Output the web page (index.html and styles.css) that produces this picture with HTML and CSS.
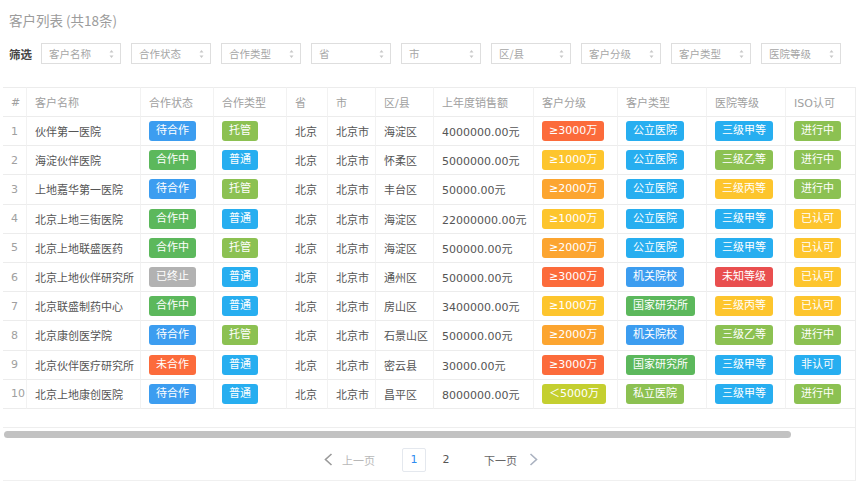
FILE: index.html
```html
<!DOCTYPE html>
<html lang="zh-CN">
<head>
<meta charset="utf-8">
<title>客户列表</title>
<link rel="stylesheet" href="styles.css">
</head>
<body>
<div class="title">客户列表 (共18条)</div>
<div class="filters">
  <span class="filters-label">筛选</span>
  <div class="select"><span>客户名称</span><svg class="arrows" width="5" height="10" viewBox="0 0 5 10"><path d="M2.5 1 L4.5 3.5 L0.5 3.5 Z M2.5 9 L4.5 6.5 L0.5 6.5 Z"/></svg></div>
  <div class="select"><span>合作状态</span><svg class="arrows" width="5" height="10" viewBox="0 0 5 10"><path d="M2.5 1 L4.5 3.5 L0.5 3.5 Z M2.5 9 L4.5 6.5 L0.5 6.5 Z"/></svg></div>
  <div class="select"><span>合作类型</span><svg class="arrows" width="5" height="10" viewBox="0 0 5 10"><path d="M2.5 1 L4.5 3.5 L0.5 3.5 Z M2.5 9 L4.5 6.5 L0.5 6.5 Z"/></svg></div>
  <div class="select"><span>省</span><svg class="arrows" width="5" height="10" viewBox="0 0 5 10"><path d="M2.5 1 L4.5 3.5 L0.5 3.5 Z M2.5 9 L4.5 6.5 L0.5 6.5 Z"/></svg></div>
  <div class="select"><span>市</span><svg class="arrows" width="5" height="10" viewBox="0 0 5 10"><path d="M2.5 1 L4.5 3.5 L0.5 3.5 Z M2.5 9 L4.5 6.5 L0.5 6.5 Z"/></svg></div>
  <div class="select"><span>区/县</span><svg class="arrows" width="5" height="10" viewBox="0 0 5 10"><path d="M2.5 1 L4.5 3.5 L0.5 3.5 Z M2.5 9 L4.5 6.5 L0.5 6.5 Z"/></svg></div>
  <div class="select"><span>客户分级</span><svg class="arrows" width="5" height="10" viewBox="0 0 5 10"><path d="M2.5 1 L4.5 3.5 L0.5 3.5 Z M2.5 9 L4.5 6.5 L0.5 6.5 Z"/></svg></div>
  <div class="select"><span>客户类型</span><svg class="arrows" width="5" height="10" viewBox="0 0 5 10"><path d="M2.5 1 L4.5 3.5 L0.5 3.5 Z M2.5 9 L4.5 6.5 L0.5 6.5 Z"/></svg></div>
  <div class="select"><span>医院等级</span><svg class="arrows" width="5" height="10" viewBox="0 0 5 10"><path d="M2.5 1 L4.5 3.5 L0.5 3.5 Z M2.5 9 L4.5 6.5 L0.5 6.5 Z"/></svg></div>
</div>

<div class="panel">
  <table class="grid">
    <colgroup>
      <col class="c-idx"><col class="c-name"><col class="c-status"><col class="c-type"><col class="c-prov"><col class="c-city"><col class="c-dist"><col class="c-sales"><col class="c-level"><col class="c-ctype"><col class="c-grade"><col class="c-iso">
    </colgroup>
    <thead>
      <tr><th>#</th><th>客户名称</th><th>合作状态</th><th>合作类型</th><th>省</th><th>市</th><th>区/县</th><th>上年度销售额</th><th>客户分级</th><th>客户类型</th><th>医院等级</th><th>ISO认可</th></tr>
    </thead>
    <tbody>
      <tr><td class="idx">1</td><td>伙伴第一医院</td><td><span class="tag blue">待合作</span></td><td><span class="tag lgreen">托管</span></td><td>北京</td><td>北京市</td><td>海淀区</td><td>4000000.00元</td><td><span class="tag redorange">≥3000万</span></td><td><span class="tag sky">公立医院</span></td><td><span class="tag sky">三级甲等</span></td><td><span class="tag lgreen">进行中</span></td></tr>
      <tr><td class="idx">2</td><td>海淀伙伴医院</td><td><span class="tag green">合作中</span></td><td><span class="tag sky">普通</span></td><td>北京</td><td>北京市</td><td>怀柔区</td><td>5000000.00元</td><td><span class="tag yellow">≥1000万</span></td><td><span class="tag sky">公立医院</span></td><td><span class="tag lgreen">三级乙等</span></td><td><span class="tag lgreen">进行中</span></td></tr>
      <tr><td class="idx">3</td><td>上地嘉华第一医院</td><td><span class="tag blue">待合作</span></td><td><span class="tag lgreen">托管</span></td><td>北京</td><td>北京市</td><td>丰台区</td><td>50000.00元</td><td><span class="tag orange">≥2000万</span></td><td><span class="tag sky">公立医院</span></td><td><span class="tag yellow">三级丙等</span></td><td><span class="tag lgreen">进行中</span></td></tr>
      <tr><td class="idx">4</td><td>北京上地三街医院</td><td><span class="tag green">合作中</span></td><td><span class="tag sky">普通</span></td><td>北京</td><td>北京市</td><td>海淀区</td><td>22000000.00元</td><td><span class="tag yellow">≥1000万</span></td><td><span class="tag sky">公立医院</span></td><td><span class="tag sky">三级甲等</span></td><td><span class="tag yellow">已认可</span></td></tr>
      <tr><td class="idx">5</td><td>北京上地联盛医药</td><td><span class="tag green">合作中</span></td><td><span class="tag lgreen">托管</span></td><td>北京</td><td>北京市</td><td>海淀区</td><td>500000.00元</td><td><span class="tag orange">≥2000万</span></td><td><span class="tag sky">公立医院</span></td><td><span class="tag sky">三级甲等</span></td><td><span class="tag yellow">已认可</span></td></tr>
      <tr><td class="idx">6</td><td>北京上地伙伴研究所</td><td><span class="tag gray">已终止</span></td><td><span class="tag sky">普通</span></td><td>北京</td><td>北京市</td><td>通州区</td><td>500000.00元</td><td><span class="tag redorange">≥3000万</span></td><td><span class="tag blue">机关院校</span></td><td><span class="tag red">未知等级</span></td><td><span class="tag yellow">已认可</span></td></tr>
      <tr><td class="idx">7</td><td>北京联盛制药中心</td><td><span class="tag green">合作中</span></td><td><span class="tag sky">普通</span></td><td>北京</td><td>北京市</td><td>房山区</td><td>3400000.00元</td><td><span class="tag yellow">≥1000万</span></td><td><span class="tag green">国家研究所</span></td><td><span class="tag yellow">三级丙等</span></td><td><span class="tag yellow">已认可</span></td></tr>
      <tr><td class="idx">8</td><td>北京康创医学院</td><td><span class="tag blue">待合作</span></td><td><span class="tag lgreen">托管</span></td><td>北京</td><td>北京市</td><td>石景山区</td><td>500000.00元</td><td><span class="tag orange">≥2000万</span></td><td><span class="tag blue">机关院校</span></td><td><span class="tag lgreen">三级乙等</span></td><td><span class="tag lgreen">进行中</span></td></tr>
      <tr><td class="idx">9</td><td>北京伙伴医疗研究所</td><td><span class="tag redorange">未合作</span></td><td><span class="tag sky">普通</span></td><td>北京</td><td>北京市</td><td>密云县</td><td>30000.00元</td><td><span class="tag redorange">≥3000万</span></td><td><span class="tag green">国家研究所</span></td><td><span class="tag sky">三级甲等</span></td><td><span class="tag sky">非认可</span></td></tr>
      <tr><td class="idx">10</td><td>北京上地康创医院</td><td><span class="tag blue">待合作</span></td><td><span class="tag sky">普通</span></td><td>北京</td><td>北京市</td><td>昌平区</td><td>8000000.00元</td><td><span class="tag lime">＜5000万</span></td><td><span class="tag lgreen">私立医院</span></td><td><span class="tag sky">三级甲等</span></td><td><span class="tag lgreen">进行中</span></td></tr>
    </tbody>
  </table>

  <div class="hscroll"><div class="thumb"></div></div>

  <div class="pager">
    <div class="pg-prev">
      <svg width="9" height="13" viewBox="0 0 9 13"><polyline points="7.5,1 1.5,6.5 7.5,12" fill="none" stroke="#9a9a9a" stroke-width="1.6"/></svg>
      <span>上一页</span>
    </div>
    <div class="pg-pages">
      <span class="pg-num active">1</span>
      <span class="pg-num">2</span>
    </div>
    <div class="pg-next">
      <span>下一页</span>
      <svg width="9" height="13" viewBox="0 0 9 13"><polyline points="1.5,1 7.5,6.5 1.5,12" fill="none" stroke="#aab2c0" stroke-width="1.6"/></svg>
    </div>
  </div>
</div>
</body>
</html>
```

FILE: styles.css
```css
html, body {
  margin: 0;
  padding: 0;
  background: #fff;
}

body {
  font-family: "DejaVu Sans", "Noto Sans CJK SC", sans-serif;
  font-size: 11px;
  color: #555;
}

.title {
  padding: 10px 9px 0;
  height: 20px;
  line-height: 20px;
  font-family: "Noto Sans CJK SC", sans-serif;
  font-size: 13.5px;
  color: #9c9c9c;
}

.filters {
  display: flex;
  align-items: center;
  gap: 10px;
  margin-top: 13px;
  padding-left: 9px;
  height: 21px;
}

.filters-label {
  flex: 0 0 22px;
  width: 22px;
  white-space: nowrap;
  font-family: "Noto Sans CJK SC", sans-serif;
  font-weight: bold;
  font-size: 11.5px;
  color: #444;
}

.select {
  flex: 0 0 80px;
  width: 80px;
  height: 21px;
  box-sizing: border-box;
  border: 1px solid #dedede;
  display: flex;
  align-items: center;
  justify-content: space-between;
  padding: 0 6px 0 7px;
  font-family: "Noto Sans CJK SC", sans-serif;
  font-size: 10.5px;
  color: #a6a6a6;
}

.arrows {
  fill: #c8c8c8;
}

.panel {
  margin: 23px 0 0 3px;
  width: 853px;
  box-sizing: border-box;
  border-right: 1px solid #ededed;
  border-bottom: 1px solid #f0f0f0;
  overflow: hidden;
}

.grid {
  border-collapse: separate;
  border-spacing: 0;
  table-layout: fixed;
  width: 852px;
}

.c-idx { width: 24px; }
.c-name { width: 114px; }
.c-status { width: 73px; }
.c-type { width: 73px; }
.c-prov { width: 41px; }
.c-city { width: 48px; }
.c-dist { width: 58px; }
.c-sales { width: 100px; }
.c-level { width: 84px; }
.c-ctype { width: 89px; }
.c-grade { width: 79px; }
.c-iso { width: 69px; }

.grid th,
.grid td {
  padding: 0 8px;
  text-align: left;
  white-space: nowrap;
  overflow: hidden;
  vertical-align: middle;
  border-right: 1px solid #f2f2f2;
  border-bottom: 1px solid #ececec;
}

.grid th:last-child,
.grid td:last-child {
  border-right: none;
}

.grid thead tr {
  height: 30px;
}

.grid th {
  font-weight: normal;
  color: #a0a0a0;
  border-top: 1px solid #ececec;
}

.grid tbody tr {
  height: 29.2px;
}

.grid td.idx {
  color: #a0a0a0;
}

.tag {
  display: inline-block;
  height: 20px;
  line-height: 20px;
  padding: 0 7px;
  border-radius: 3px;
  color: #fff;
  font-size: 11px;
}

.tag.blue { background: #3c9df0; }
.tag.sky { background: #27aef0; }
.tag.green { background: #5cb85c; }
.tag.lgreen { background: #8cc152; }
.tag.yellow { background: #fdc52d; }
.tag.orange { background: #fca530; }
.tag.redorange { background: #fc6b3b; }
.tag.red { background: #e94f4f; }
.tag.gray { background: #b2b2b2; }
.tag.lime { background: #c4cf30; }

.hscroll {
  margin-top: 18px;
  border-top: 1px solid #eeeeee;
  height: 14px;
  box-sizing: border-box;
  padding: 3px 0 0 1px;
}

.thumb {
  width: 787px;
  height: 7px;
  border-radius: 4px;
  background: #c2c2c2;
}

.pager {
  display: flex;
  align-items: center;
  justify-content: center;
  height: 24px;
  margin-top: 7px;
  padding: 0 0 8px 4px;
  font-family: "Noto Sans CJK SC", sans-serif;
  font-size: 11px;
}

.pg-prev {
  display: flex;
  align-items: center;
  gap: 9px;
  color: #b8b8b8;
  margin-right: 27px;
}

.pg-next {
  display: flex;
  align-items: center;
  gap: 12px;
  color: #666;
  margin-left: 26px;
}

.pg-pages {
  display: flex;
  gap: 8px;
}

.pg-num {
  width: 24px;
  height: 24px;
  box-sizing: border-box;
  display: flex;
  align-items: center;
  justify-content: center;
  font-family: "DejaVu Sans", sans-serif;
  font-size: 11px;
  color: #555;
  border: 1px solid transparent;
  border-radius: 2px;
}

.pg-num.active {
  border-color: #e4e8ee;
  color: #2d8cf0;
}
```
